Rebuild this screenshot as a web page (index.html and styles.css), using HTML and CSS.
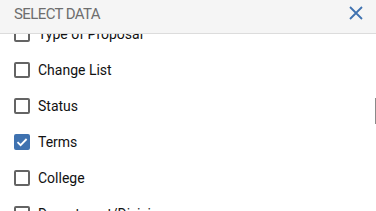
FILE: index.html
```html
<!DOCTYPE html>
<html lang="en">
<head>
    <meta charset="UTF-8">
    <meta name="viewport" content="width=device-width, initial-scale=1.0">
    <title>Select Data</title>
    <link rel="stylesheet" href="styles.css">
</head>
<body>
    <div class="panel">
        <div class="panel-header">
            <span class="panel-title">SELECT DATA</span>
            <button class="close-button" aria-label="Close">
                <svg width="14" height="14" viewBox="0 0 14 14">
                    <path d="M1 1 L13 13 M13 1 L1 13" stroke="#3f72b0" stroke-width="1.8" fill="none"/>
                </svg>
            </button>
        </div>
        <div class="panel-body">
            <ul class="field-list">
                <li class="field"><span class="box"></span>Type of Proposal</li>
                <li class="field"><span class="box"></span>Change List</li>
                <li class="field"><span class="box"></span>Status</li>
                <li class="field"><span class="box checked">
                    <svg width="12" height="12" viewBox="0 0 12 12">
                        <path d="M1.5 6.2 L4.6 9.2 L10.6 3" stroke="#fff" stroke-width="1.8" fill="none"/>
                    </svg>
                </span>Terms</li>
                <li class="field"><span class="box"></span>College</li>
                <li class="field"><span class="box"></span>Department/Division</li>
            </ul>
            <div class="scroll-thumb"></div>
        </div>
    </div>
</body>
</html>
```

FILE: styles.css
```css
body {
    margin: 0;
    font-family: Roboto, "Liberation Sans", Arial, sans-serif;
    background: #fff;
}
.panel {
    width: 376px;
    height: 211px;
    display: flex;
    flex-direction: column;
    overflow: hidden;
}
.panel-header {
    height: 27px;
    flex-shrink: 0;
    display: flex;
    align-items: center;
    justify-content: space-between;
    padding: 0 13px 6px 14px;
    background: #f5f5f5;
    border-bottom: 1px solid #dcdcdc;
    position: relative;
    z-index: 1;
}
.panel-title {
    font-size: 15px;
    letter-spacing: -0.6px;
    color: #6e6e6e;
}
.close-button {
    background: none;
    border: none;
    padding: 0 0 1px;
    width: 14px;
    height: 15px;
    cursor: pointer;
    display: flex;
}
.panel-body {
    flex: 1;
    position: relative;
    overflow: hidden;
}
.field-list {
    list-style: none;
    margin: -18px 0 0;
    padding: 0 14px;
}
.field {
    height: 36px;
    display: flex;
    align-items: center;
    gap: 8px;
    font-size: 14px;
    color: #111;
}
.box {
    width: 16px;
    height: 16px;
    box-sizing: border-box;
    border: 2px solid #646464;
    border-radius: 2px;
    display: flex;
    align-items: center;
    justify-content: center;
}
.box.checked {
    background: #3f72b0;
    border-color: #3f72b0;
}
.scroll-thumb {
    position: absolute;
    right: 0;
    top: 64px;
    width: 1px;
    height: 26px;
    background: #8a8a8a;
}
```
